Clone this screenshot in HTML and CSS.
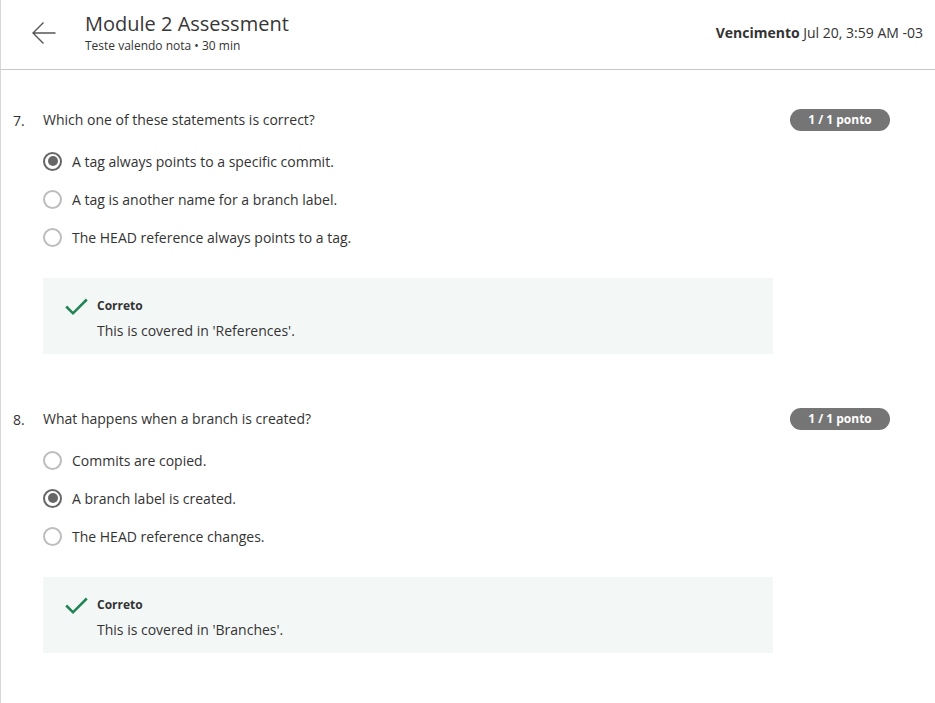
FILE: index.html
```html
<!DOCTYPE html>
<html>
<head>
<meta charset="utf-8">
<link rel="stylesheet" href="styles.css">
</head>
<body>
<div class="page">
  <header class="header">
    <button class="back" aria-label="Voltar">
      <svg width="26" height="24" viewBox="0 0 26 24"><path d="M24.5 12H2 M12.5 1.5L2 12l10.5 10.5" fill="none" stroke="#555" stroke-width="1.4"/></svg>
    </button>
    <div class="titles">
      <h1 class="title">Module 2 Assessment</h1>
      <div class="subtitle">Teste valendo nota • 30 min</div>
    </div>
    <div class="due"><b>Vencimento</b> Jul 20, 3:59 AM -03</div>
  </header>
  <main class="content">
    <section class="question">
      <div class="q-row">
        <span class="q-num">7.</span>
        <span class="q-text">Which one of these statements is correct?</span>
        <span class="badge">1 / 1 ponto</span>
      </div>
      <ul class="options">
        <li class="option"><span class="radio checked"></span>A tag always points to a specific commit.</li>
        <li class="option"><span class="radio"></span>A tag is another name for a branch label.</li>
        <li class="option"><span class="radio"></span>The HEAD reference always points to a tag.</li>
      </ul>
      <div class="feedback">
        <svg class="check" width="23" height="18" viewBox="0 0 23 18"><path d="M1.2 8.5L8 15.3 21.8 1.5" fill="none" stroke="#1f8354" stroke-width="2.5"/></svg>
        <div>
          <div class="fb-title">Correto</div>
          <div class="fb-text">This is covered in 'References'.</div>
        </div>
      </div>
    </section>
    <section class="question">
      <div class="q-row">
        <span class="q-num">8.</span>
        <span class="q-text">What happens when a branch is created?</span>
        <span class="badge">1 / 1 ponto</span>
      </div>
      <ul class="options">
        <li class="option"><span class="radio"></span>Commits are copied.</li>
        <li class="option"><span class="radio checked"></span>A branch label is created.</li>
        <li class="option"><span class="radio"></span>The HEAD reference changes.</li>
      </ul>
      <div class="feedback">
        <svg class="check" width="23" height="18" viewBox="0 0 23 18"><path d="M1.2 8.5L8 15.3 21.8 1.5" fill="none" stroke="#1f8354" stroke-width="2.5"/></svg>
        <div>
          <div class="fb-title">Correto</div>
          <div class="fb-text">This is covered in 'Branches'.</div>
        </div>
      </div>
    </section>
  </main>
</div>
</body>
</html>
```
FILE: styles.css
```css
* { box-sizing: border-box; }
html, body { margin: 0; padding: 0; background: #fff; }
body {
  font-family: "Open Sans", "Noto Sans", sans-serif;
  color: #333;
  font-size: 14px;
}
.page {
  border-left: 1px solid #d6d6d6;
  min-height: 703px;
}
.header {
  display: flex;
  align-items: flex-start;
  height: 70px;
  border-bottom: 1px solid #c8c8c8;
  padding: 11px 12px 0 30px;
}
.back {
  border: 0;
  background: none;
  padding: 0;
  margin-top: 10px;
  width: 26px;
  height: 24px;
  cursor: pointer;
}
.titles {
  margin-left: 28px;
  flex: 1;
}
.title {
  margin: 0;
  font-size: 20px;
  line-height: 26px;
  font-weight: 400;
  color: #373737;
}
.subtitle {
  margin-top: 1px;
  font-size: 12px;
  line-height: 16px;
  color: #333;
}
.due {
  margin-top: 12px;
  font-size: 14px;
  line-height: 20px;
  color: #333;
}
.due b { font-weight: 700; }
.content {
  padding: 39px 45px 0 12px;
}
.question { margin-bottom: 54px; }
.q-row {
  display: flex;
  align-items: center;
  height: 22px;
}
.q-num { width: 30px; font-size: 14px; }
.q-text { flex: 1; font-size: 14px; line-height: 20px; }
.badge {
  background: #757575;
  color: #fff;
  font-size: 12px;
  font-weight: 700;
  height: 22px;
  line-height: 22px;
  width: 100px;
  text-align: center;
  border-radius: 11px;
}
.options {
  list-style: none;
  margin: 11px 0 0 30px;
  padding: 0;
}
.option {
  display: flex;
  align-items: center;
  height: 38px;
  font-size: 14px;
}
.radio {
  width: 19px;
  height: 19px;
  border: 2px solid #bdbdbd;
  border-radius: 50%;
  margin-right: 10px;
  position: relative;
  flex: none;
}
.radio.checked { border-color: #666; }
.radio.checked::after {
  content: "";
  position: absolute;
  left: 2.5px;
  top: 2.5px;
  width: 10px;
  height: 10px;
  border-radius: 50%;
  background: #666;
}
.feedback {
  margin: 22px 0 0 30px;
  width: 730px;
  background: #f3f8f7;
  display: flex;
  align-items: flex-start;
  padding: 19px 20px 13px 22px;
  height: 76px;
}
.check { margin-top: 1px; margin-right: 9px; flex: none; }
.fb-title { font-size: 12px; font-weight: 700; line-height: 18px; }
.fb-text { margin-top: 6px; font-size: 14px; line-height: 20px; }
```
